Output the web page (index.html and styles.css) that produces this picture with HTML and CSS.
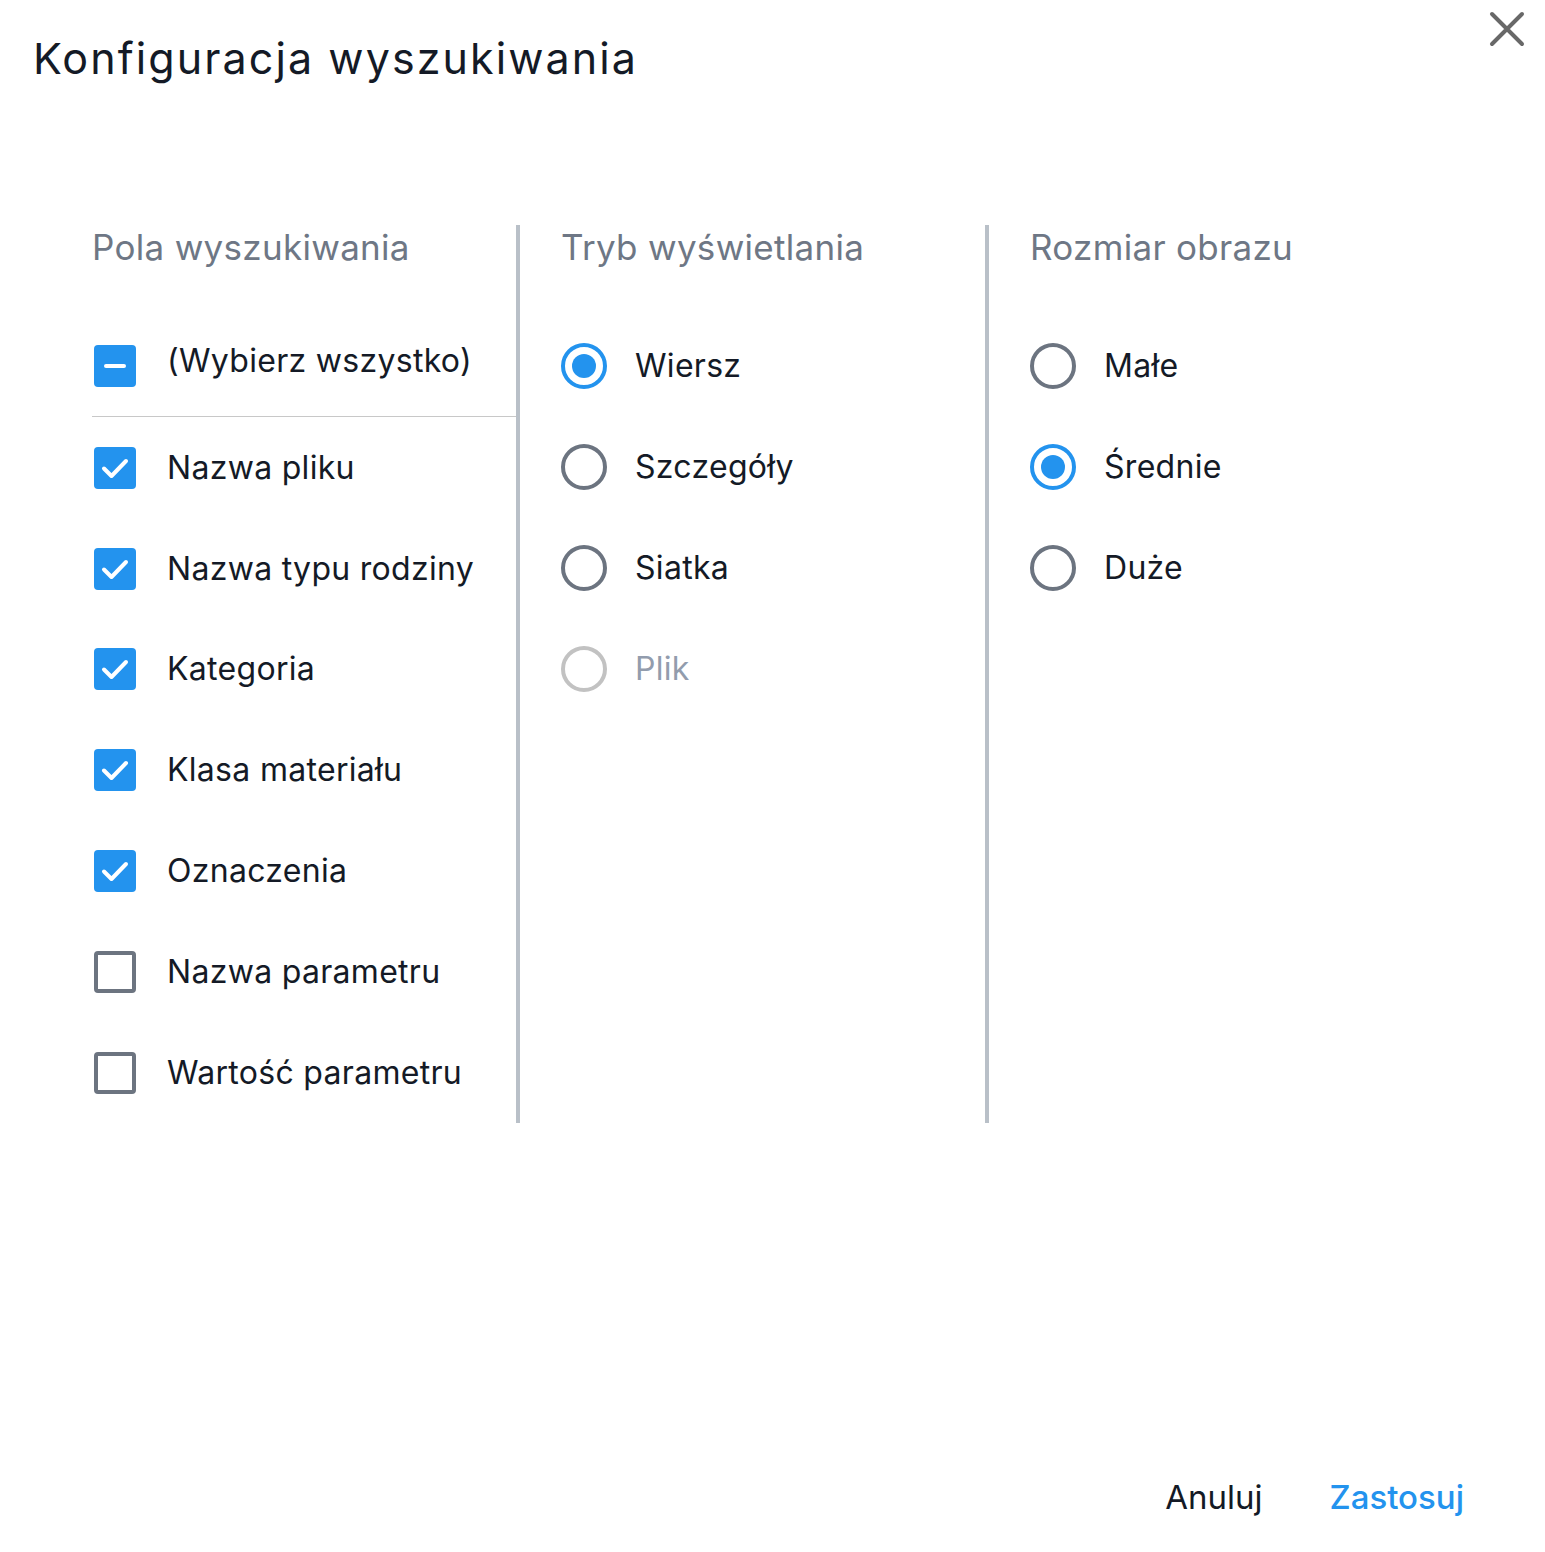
FILE: index.html
```html
<!DOCTYPE html>
<html lang="pl">
<head>
<meta charset="utf-8">
<title>Konfiguracja wyszukiwania</title>
<link rel="stylesheet" href="styles.css">
</head>
<body>
<div class="dialog">
  <header class="dialog-header">
    <h1 class="title">Konfiguracja wyszukiwania</h1>
    <button class="close" aria-label="Zamknij">
      <svg width="36" height="36" viewBox="0 0 36 36"><path d="M3 3 L33 33 M33 3 L3 33" stroke="#686868" stroke-width="4" stroke-linecap="round" fill="none"/></svg>
    </button>
  </header>

  <div class="columns">
    <section class="col col-fields">
      <h2 class="col-title">Pola wyszukiwania</h2>
      <div class="row row-all">
        <span class="box box-indeterminate"><svg width="42" height="42" viewBox="0 0 42 42"><path d="M12 21 H30" stroke="#fff" stroke-width="4" stroke-linecap="round"/></svg></span>
        <span class="label label-all">(Wybierz wszystko)</span>
      </div>
      <div class="row"><span class="box box-checked"><svg width="42" height="42" viewBox="0 0 42 42"><path d="M10 21.5 L17.5 29 L32 14" stroke="#fff" stroke-width="4" stroke-linecap="round" stroke-linejoin="round" fill="none"/></svg></span><span class="label">Nazwa pliku</span></div>
      <div class="row"><span class="box box-checked"><svg width="42" height="42" viewBox="0 0 42 42"><path d="M10 21.5 L17.5 29 L32 14" stroke="#fff" stroke-width="4" stroke-linecap="round" stroke-linejoin="round" fill="none"/></svg></span><span class="label">Nazwa typu rodziny</span></div>
      <div class="row"><span class="box box-checked"><svg width="42" height="42" viewBox="0 0 42 42"><path d="M10 21.5 L17.5 29 L32 14" stroke="#fff" stroke-width="4" stroke-linecap="round" stroke-linejoin="round" fill="none"/></svg></span><span class="label">Kategoria</span></div>
      <div class="row"><span class="box box-checked"><svg width="42" height="42" viewBox="0 0 42 42"><path d="M10 21.5 L17.5 29 L32 14" stroke="#fff" stroke-width="4" stroke-linecap="round" stroke-linejoin="round" fill="none"/></svg></span><span class="label">Klasa materiału</span></div>
      <div class="row"><span class="box box-checked"><svg width="42" height="42" viewBox="0 0 42 42"><path d="M10 21.5 L17.5 29 L32 14" stroke="#fff" stroke-width="4" stroke-linecap="round" stroke-linejoin="round" fill="none"/></svg></span><span class="label">Oznaczenia</span></div>
      <div class="row"><span class="box box-empty"></span><span class="label">Nazwa parametru</span></div>
      <div class="row"><span class="box box-empty"></span><span class="label">Wartość parametru</span></div>
    </section>

    <section class="col col-mode">
      <h2 class="col-title">Tryb wyświetlania</h2>
      <div class="row"><span class="radio radio-on"></span><span class="label">Wiersz</span></div>
      <div class="row"><span class="radio"></span><span class="label">Szczegóły</span></div>
      <div class="row"><span class="radio"></span><span class="label">Siatka</span></div>
      <div class="row"><span class="radio radio-disabled"></span><span class="label label-disabled">Plik</span></div>
    </section>

    <section class="col col-size">
      <h2 class="col-title">Rozmiar obrazu</h2>
      <div class="row"><span class="radio"></span><span class="label">Małe</span></div>
      <div class="row"><span class="radio radio-on"></span><span class="label">Średnie</span></div>
      <div class="row"><span class="radio"></span><span class="label">Duże</span></div>
    </section>
  </div>

  <footer class="dialog-footer">
    <button class="btn btn-cancel">Anuluj</button>
    <button class="btn btn-apply">Zastosuj</button>
  </footer>
</div>
</body>
</html>
```

FILE: styles.css
```css
* { box-sizing: border-box; }

html, body {
  margin: 0;
  padding: 0;
  background: #ffffff;
}

body {
  font-family: "Inter", "Noto Sans", sans-serif;
  color: #141a26;
  width: 1545px;
  height: 1552px;
  overflow: hidden;
}

.dialog {
  display: flex;
  flex-direction: column;
  height: 1552px;
}

.dialog-header {
  display: flex;
  justify-content: space-between;
  align-items: flex-start;
  padding: 30px 20px 0 33px;
  height: 225px;
}

.title {
  margin: 0;
  font-size: 43px;
  font-weight: 400;
  line-height: 56px;
  letter-spacing: 2.1px;
}

.close {
  border: 0;
  background: none;
  padding: 0;
  margin-top: -19px;
  width: 36px;
  height: 36px;
  cursor: pointer;
}

.columns {
  display: flex;
  margin-left: 92px;
  height: 898px;
}

.col {
  display: flex;
  flex-direction: column;
}

.col-fields {
  width: 428px;
  border-right: 4px solid #b9c0c8;
}

.col-mode {
  width: 469px;
  padding-left: 41px;
  border-right: 4px solid #b9c0c8;
}

.col-size {
  padding-left: 41px;
  flex: 1;
}

.col-title {
  margin: 0;
  height: 91px;
  font-size: 35px;
  font-weight: 400;
  color: #6e7785;
  line-height: 44px;
  padding-top: 0;
  letter-spacing: 0.3px;
}

.row {
  display: flex;
  align-items: center;
  height: 100.8px;
  flex: none;
}

.row-all {
  height: 102px;
  border-bottom: 1px solid #c8c8c8;
}

.col-fields .row { padding-left: 2px; }

.box {
  width: 42px;
  height: 42px;
  border-radius: 4px;
  flex: none;
  display: flex;
}

.box-checked, .box-indeterminate {
  background: #2393ee;
}

.box-empty {
  border: 4px solid #6c7480;
}

.label {
  font-size: 32px;
  line-height: 40px;
  margin-left: 31px;
  letter-spacing: 0.3px;
}

.label-all {
  margin-top: -10px;
}

.radio {
  width: 46px;
  height: 46px;
  border-radius: 50%;
  border: 4px solid #6c7480;
  flex: none;
  position: relative;
}

.radio-on {
  border-color: #2393ee;
}

.radio-on::after {
  content: "";
  position: absolute;
  left: 7px;
  top: 7px;
  width: 24px;
  height: 24px;
  border-radius: 50%;
  background: #2393ee;
}

.radio-disabled {
  border-color: #c2c2c2;
}

.col-mode .label, .col-size .label {
  margin-left: 28px;
}

.label-disabled {
  color: #929cad;
}

.dialog-footer {
  display: flex;
  justify-content: flex-end;
  padding-right: 81px;
  margin-top: 354px;
}

.btn {
  border: 0;
  background: none;
  font-family: inherit;
  font-size: 33px;
  padding: 0;
  line-height: 40px;
  cursor: pointer;
}

.btn-cancel {
  color: #141a26;
  margin-right: 67px;
}

.btn-apply {
  color: #2393ee;
  font-weight: 500;
}
```
